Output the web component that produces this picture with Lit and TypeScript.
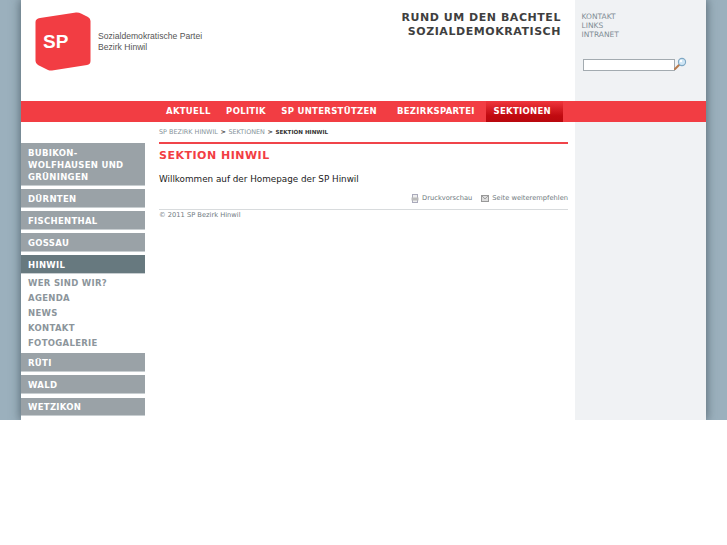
import { LitElement, html, css } from "lit";
import { customElement } from "lit/decorators.js";

@customElement("app-root")
export class AppRoot extends LitElement {
  static styles = css`
    :host { display: block; background: #fff; height: 545px; font-family: "DejaVu Sans", Verdana, sans-serif; }
    .page { height: 420px; overflow: hidden; background: #9bb0bd; padding: 0 21px; }
    .frame { height: 420px; background: #fff; display: flex; flex-direction: column; box-shadow: 0 0 9px 1px rgba(70, 85, 95, 0.75); }
    .header { height: 101px; display: flex; }
    .brand { width: 554px; display: flex; justify-content: space-between; box-sizing: border-box; padding: 12px 14px 0 14px; }
    .logo { display: flex; gap: 7px; }
    .logo svg { display: block; }
    .logo-text { font: 8.6px/11px "Liberation Sans", Arial, sans-serif; color: #555; padding-top: 18.5px; }
    .slogan { margin: -1px 0 0; font-size: 11px; line-height: 14px; font-weight: bold; letter-spacing: 0.55px; color: #3f3f3f; text-align: right; }
    .side { flex: 1; background: #f0f2f4; }
    .head-side { padding: 11.5px 0 0 6.5px; }
    .meta a { display: block; font-size: 7.5px; line-height: 9px; color: #7f8c94; }
    .search { display: flex; align-items: flex-start; margin: 18.5px 0 0 1.5px; }
    .search input { box-sizing: border-box; width: 92px; height: 11.5px; margin: 2px 0 0; padding: 0; border: 1px solid #a3abb0; background: #fff; display: block; }
    .search svg { margin-left: -1px; }
    .nav { height: 21px; background: #f23d43; display: flex; padding-left: 137.25px; }
    .nav a { font-size: 8.5px; line-height: 21px; font-weight: bold; letter-spacing: 0.3px; color: #fff; padding: 0 7.75px; white-space: nowrap; }
    .nav a.wide { margin-right: 4.5px; }
    .nav a.near { margin-right: 4px; }
    .nav a.on { background: linear-gradient(#f0363c 0%, #c10a10 70%, #b9080e 100%); padding: 0 12px 0 7px; }
    .body { flex: 1; display: flex; min-height: 0; }
    .menu { width: 124px; margin-right: 14px; padding-top: 21px; flex: none; }
    .item { display: block; background: #9aa2a7; color: #fff; font-size: 8.5px; line-height: 12px; font-weight: bold; letter-spacing: 0.3px; padding: 3.5px 7px 2px; margin-bottom: 3.6px; border-bottom: 1px solid #c8ced1; }
    .item.on { background: #67797f; margin-bottom: 0; }
    .sub { padding: 2.5px 0 2px; }
    .sub a { display: block; color: #8c959b; font-size: 8.5px; line-height: 15px; font-weight: bold; letter-spacing: 0.3px; padding-left: 7px; }
    .main { width: 409px; flex: none; margin-right: 7px; }
    .crumbs { font-size: 6.45px; line-height: 9px; padding-top: 6px; height: 9px; color: #87939a; white-space: nowrap; }
    .crumbs b { color: #333; font-size: 5.6px; }
    .crumbs i { font-style: normal; font-weight: bold; color: #444; padding: 0 0.5px; }
    h1 { margin: 5px 0 0; border-top: 2px solid #f0444a; font-size: 11px; line-height: 14px; letter-spacing: 0.5px; padding-top: 5px; color: #f23d43; font-weight: bold; }
    .intro { margin: 10px 0 0; font-size: 8.8px; line-height: 12px; color: #222; }
    .tools { display: flex; justify-content: flex-end; gap: 9px; margin-top: 8px; height: 10px; }
    .tools span { display: flex; gap: 3px; align-items: center; font-size: 6.7px; line-height: 10px; color: #6f7a80; }
    .foot { margin-top: 6px; border-top: 1px solid #d8dbdd; font-size: 6.7px; line-height: 9px; padding-top: 1px; color: #6f7a80; }
  `;

  render() {
    return html`<div class="page"><div class="frame">
      <div class="header">
        <div class="brand">
          <div class="logo">
            <svg width="56" height="60" viewBox="0 0 56 60">
              <path d="M5 6 L41 0.5 Q44 0.3 46 1.5 L53 5 Q55.5 6.5 55.5 9 L55.5 49 Q55.5 52.5 52 53 L17 58.5 Q15 58.8 13 58 L3 53 Q0.5 51.5 0.5 49 L0.5 10 Q0.5 6.8 5 6 Z" fill="#f23d43"/>
              <text x="8" y="35.5" font-family="Liberation Sans, Arial, sans-serif" font-weight="bold" font-size="19" fill="#fff">SP</text>
            </svg>
            <div class="logo-text">Sozialdemokratische Partei<br>Bezirk Hinwil</div>
          </div>
          <p class="slogan">RUND UM DEN BACHTEL<br>SOZIALDEMOKRATISCH</p>
        </div>
        <div class="side head-side">
          <div class="meta"><a>KONTAKT</a><a>LINKS</a><a>INTRANET</a></div>
          <div class="search">
            <input type="text" aria-label="Suche" />
            <svg width="13" height="14" viewBox="0 0 13 14">
              <path d="M1 12 L5 8" stroke="#b8794a" stroke-width="2" stroke-linecap="round"/>
              <circle cx="8" cy="5" r="3.6" fill="#cfe6f5" stroke="#7fa8c4" stroke-width="1.1"/>
              <circle cx="7" cy="4" r="1.2" fill="#fff"/>
            </svg>
          </div>
        </div>
      </div>
      <nav class="nav">
        <a>AKTUELL</a><a>POLITIK</a><a class="wide">SP UNTERSTÜTZEN</a><a class="near">BEZIRKSPARTEI</a><a class="on">SEKTIONEN</a>
      </nav>
      <div class="body">
        <div class="menu">
          <a class="item">BUBIKON-<br>WOLFHAUSEN UND<br>GRÜNINGEN</a>
          <a class="item">DÜRNTEN</a>
          <a class="item">FISCHENTHAL</a>
          <a class="item">GOSSAU</a>
          <a class="item on">HINWIL</a>
          <div class="sub"><a>WER SIND WIR?</a><a>AGENDA</a><a>NEWS</a><a>KONTAKT</a><a>FOTOGALERIE</a></div>
          <a class="item">RÜTI</a>
          <a class="item">WALD</a>
          <a class="item">WETZIKON</a>
        </div>
        <div class="main">
          <div class="crumbs">SP BEZIRK HINWIL <i>&gt;</i> SEKTIONEN <i>&gt;</i> <b>SEKTION HINWIL</b></div>
          <h1>SEKTION HINWIL</h1>
          <p class="intro">Willkommen auf der Homepage der SP Hinwil</p>
          <div class="tools">
            <span><svg width="8" height="9" viewBox="0 0 8 9"><rect x="1.5" y="0.5" width="5" height="8" fill="#eee" stroke="#aab"/><rect x="0.5" y="3.5" width="7" height="3" fill="#bbb"/></svg>Druckvorschau</span>
            <span><svg width="8" height="9" viewBox="0 0 8 9"><rect x="0.5" y="1.5" width="7" height="6" fill="#ddd" stroke="#999"/><path d="M1 2 L4 5 L7 2" fill="none" stroke="#888" stroke-width="0.7"/></svg>Seite weiterempfehlen</span>
          </div>
          <div class="foot">© 2011 SP Bezirk Hinwil</div>
        </div>
        <div class="side"></div>
      </div>
    </div></div>`;
  }
}
